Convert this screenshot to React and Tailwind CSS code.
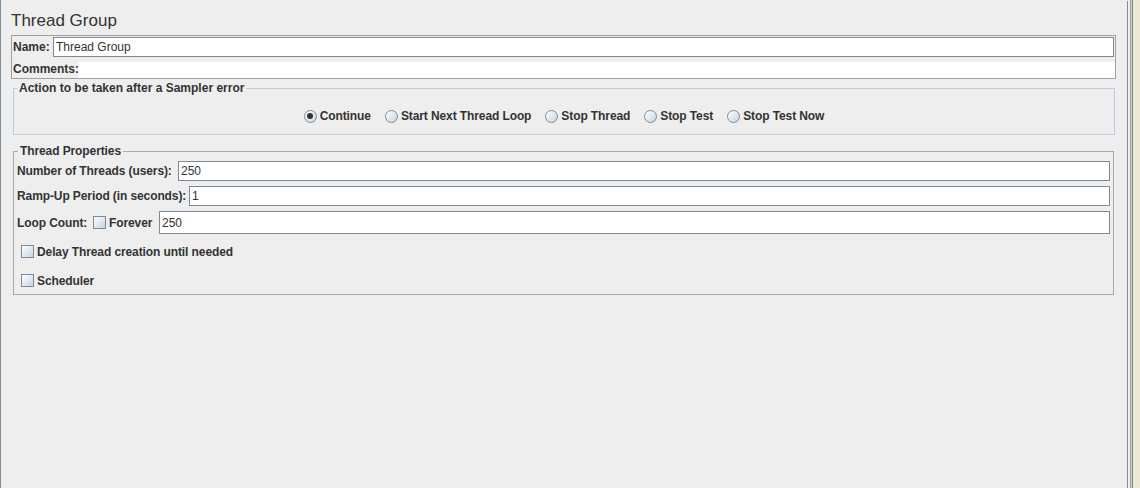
import React from 'react';

function Field({ value, tall }) {
  return (
    <input
      type="text"
      readOnly
      defaultValue={value}
      className={`flex-1 min-w-0 ${tall ? 'h-[23px]' : 'h-[20px]'} bg-white border border-[#7a8a99] px-[2px] text-[12px] font-normal tracking-normal text-[#333333] outline-none font-['Liberation_Sans',Arial,sans-serif]`}
    />
  );
}

function Check() {
  return <span className="w-[13px] h-[13px] shrink-0 border border-[#7a8a99] bg-linear-to-br from-white to-[#c6d4e3]" />;
}

function Radio({ checked }) {
  return (
    <span className="w-[13px] h-[13px] shrink-0 rounded-full border border-[#7a8a99] bg-linear-to-br from-white to-[#c6d4e3] flex items-center justify-center">
      {checked && <span className="w-[6px] h-[6px] rounded-full bg-[#333333]" />}
    </span>
  );
}

const actions = ['Continue', 'Start Next Thread Loop', 'Stop Thread', 'Stop Test', 'Stop Test Now'];

export default function App() {
  return (
    <div className="w-[1140px] h-[488px] bg-[#eeeeee] flex overflow-hidden text-[#333333] font-['Liberation_Sans',Arial,sans-serif]">
      <div className="w-[1px] bg-[#7a8a99]" />
      <div className="w-[1126px] flex flex-col pl-[10px] pr-[11px]">
        <div className="pt-[11px] text-[17px] leading-[20px]">Thread Group</div>

        {/* name / comments */}
        <div className="mt-[4px] border border-[#a0a0a0] flex flex-col">
          <div className="h-[21px] pt-[1px] pr-[1px] flex items-center">
            <span className="w-[41px] pl-[1px] text-[12px] font-bold">Name:</span>
            <Field value="Thread Group" />
          </div>
          <div className="h-[21px] flex">
            <span className="w-[66px] pl-[1px] mt-[5px] leading-[14px] text-[12px] font-bold">Comments:</span>
            <div className="flex-1 self-end h-[16px] bg-white" />
          </div>
        </div>

        {/* sampler error action */}
        <fieldset className="mt-[2px] ml-[2px] mr-[1px] border border-[#b8cfe5] pb-[8px]">
          <legend className="ml-[3px] px-[2px] text-[12px] leading-[14px] font-bold">Action to be taken after a Sampler error</legend>
          <div className="mt-[11px] h-[20px] flex items-center justify-center gap-[14px] text-[12px] font-bold tracking-[-0.1px]">
            {actions.map((a, i) => (
              <label key={a} className="flex items-center gap-[3px]">
                <Radio checked={i === 0} />
                <span>{a}</span>
              </label>
            ))}
          </div>
        </fieldset>

        {/* thread properties */}
        <fieldset className="mt-[9px] ml-[2px] mr-[2px] border border-[#a8a8a8] pl-[3px] pr-[3px] pt-[3px] pb-[3px] text-[12px] font-bold tracking-[-0.1px]">
          <legend className="ml-[1px] px-[2px] leading-[14px]">Thread Properties</legend>
          <div className="flex items-center">
            <span className="w-[161px] shrink-0">Number of Threads (users):</span>
            <Field value="250" />
          </div>
          <div className="mt-[5px] flex items-center">
            <span className="w-[172px] shrink-0">Ramp-Up Period (in seconds):</span>
            <Field value="1" />
          </div>
          <div className="mt-[5px] flex items-center">
            <span className="w-[76px] shrink-0">Loop Count:</span>
            <Check />
            <span className="w-[53px] shrink-0 pl-[3px]">Forever</span>
            <Field value="250" tall />
          </div>
          <div className="mt-[7px] h-[21px] ml-[4px] flex items-center gap-[3px]">
            <Check />
            <span>Delay Thread creation until needed</span>
          </div>
          <div className="mt-[8px] h-[21px] ml-[4px] flex items-center gap-[3px]">
            <Check />
            <span>Scheduler</span>
          </div>
        </fieldset>
      </div>
      <div className="w-[1px] mt-[1px] bg-[#7a8a99]" />
      <div className="w-[2px]" />
      <div className="w-[1px] bg-[#a0a0a0]" />
      <div className="w-[1px] bg-[#d4d0c8]" />
      <div className="w-[1px] bg-[#808080]" />
      <div className="flex-1 bg-[#ece9d8]" />
    </div>
  );
}
